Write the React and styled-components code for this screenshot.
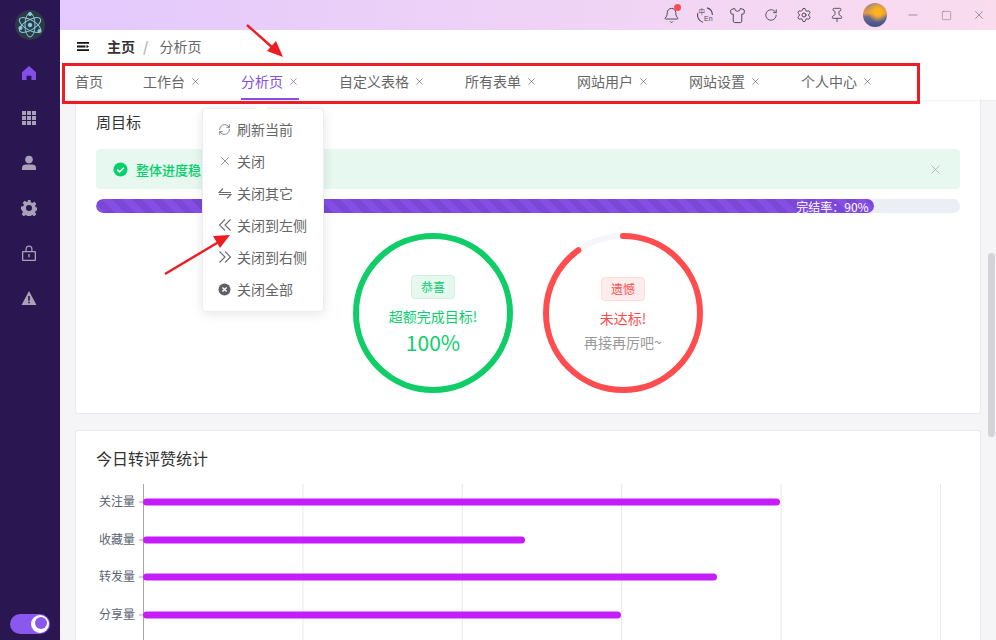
import React from "react";
import styled, { createGlobalStyle } from "styled-components";
import { RefreshCw, X, Settings, Pin, Bell, Shirt, RotateCw, Minus, Square } from "lucide-react";

const GlobalStyle = createGlobalStyle`
  html, body {
    margin: 0;
    padding: 0;
    width: 996px;
    height: 640px;
    overflow: hidden;
    font-family: "Noto Sans CJK SC", "Liberation Sans", sans-serif;
  }
  * { box-sizing: border-box; }
`;

const tabs = [
  { name: "首页", fixed: true },
  { name: "工作台" },
  { name: "分析页", active: true },
  { name: "自定义表格" },
  { name: "所有表单" },
  { name: "网站用户" },
  { name: "网站设置" },
  { name: "个人中心" },
];

const bars = [
  { name: "关注量", y: 18, end: 637 },
  { name: "收藏量", y: 56, end: 382 },
  { name: "转发量", y: 93, end: 574 },
  { name: "分享量", y: 131, end: 478 },
];

function Logo() {
  return (
    <LogoBox>
      <svg width="26" height="26" viewBox="0 0 26 26" fill="none" stroke="#86cfdc" strokeWidth="1">
        <ellipse cx="13" cy="13" rx="12" ry="5" transform="rotate(30 13 13)" />
        <ellipse cx="13" cy="13" rx="12" ry="5" transform="rotate(90 13 13)" />
        <ellipse cx="13" cy="13" rx="12" ry="5" transform="rotate(150 13 13)" />
        <circle cx="13" cy="13" r="1.8" fill="#86cfdc" />
        <circle cx="13" cy="2" r="1.6" fill="#86cfdc" />
        <circle cx="22.5" cy="19" r="1.6" fill="#86cfdc" />
        <circle cx="3.5" cy="16" r="1.6" fill="#86cfdc" />
      </svg>
    </LogoBox>
  );
}

function SideIcon({ active, children }) {
  return (
    <SideItem $active={active}>
      <svg width="16" height="16" viewBox="0 0 16 16" fill="currentColor">
        {children}
      </svg>
    </SideItem>
  );
}

function TranslateIcon() {
  return (
    <svg width="18" height="18" viewBox="0 0 18 18" fill="none" stroke="#4e4a55" strokeWidth="1.1">
      <path d="M11 1.900A7.400 7.400 0 0 1 16.400 9M7 16.200A7.400 7.400 0 0 1 1.800 7" />
      <text x="2.500" y="8" fontSize="6.500" fill="#4e4a55" stroke="none" fontFamily="Noto Sans CJK SC">中</text>
      <text x="8" y="14.500" fontSize="7" fill="#4e4a55" stroke="none" fontFamily="Liberation Sans">En</text>
    </svg>
  );
}

function CheckBadge() {
  return (
    <svg width="15" height="15" viewBox="0 0 15 15">
      <circle cx="7.500" cy="7.500" r="7" fill="#05d16c" />
      <path d="M4.200 7.600l2.400 2.300 4.200-4.200" fill="none" stroke="#fff" strokeWidth="1.500" />
    </svg>
  );
}

function CloseAllIcon() {
  return (
    <svg width="13" height="13" viewBox="0 0 13 13">
      <circle cx="6.500" cy="6.500" r="6" fill="#5f5f66" />
      <path d="M4.400 4.400l4.200 4.200M8.600 4.400l-4.200 4.200" stroke="#fff" strokeWidth="1.400" />
    </svg>
  );
}

function SwapIcon() {
  return (
    <svg width="14" height="14" viewBox="0 0 14 14" fill="none" stroke="#6b6b72" strokeWidth="1.100">
      <path d="M5 2.500 1 6.500h12M1 8.500h12l-4 4" />
    </svg>
  );
}

function DoubleArrow({ right }) {
  return (
    <svg width="14" height="14" viewBox="0 0 14 14" fill="none" stroke="#6b6b72" strokeWidth="1.100">
      <path d={right ? "M1.500 1.500 7 7l-5.500 5.500M7 1.500 12.500 7 7 12.500" : "M7 1.500 1.500 7 7 12.500M12.500 1.500 7 7l5.500 5.500"} />
    </svg>
  );
}

function Chart() {
  const grid = [0, 159.4, 318.8, 478.2, 637.6, 797];
  return (
    <svg width="864" height="156" viewBox="0 0 864 156">
      {grid.map((x, i) => (
        <line
          key={x}
          x1={47.5 + x}
          x2={47.5 + x}
          y1="0"
          y2="156"
          stroke={i === 0 ? "#a7a7ae" : "#e6e6ee"}
        />
      ))}
      {bars.map((bar) => (
        <g key={bar.name}>
          <line x1="43" x2="47" y1={bar.y} y2={bar.y} stroke="#a7a7ae" />
          <text x="39" y={bar.y + 4} fontSize="12" textAnchor="end" fill="#5a6472">
            {bar.name}
          </text>
          <rect x="47" y={bar.y - 3.5} width={bar.end} height="7" rx="3.5" fill="#c41cfa" />
        </g>
      ))}
    </svg>
  );
}

export default function App() {
  return (
    <Page>
      <GlobalStyle />
      <Sidebar>
        <Logo />
        <SideMenu>
          <SideIcon active>
            <path d="M8 1 1 7.200V15h4.600v-4.200h4.800V15H15V7.200z" />
          </SideIcon>
          <SideIcon>
            <path d="M1 1h4v4H1zM6 1h4v4H6zM11 1h4v4h-4zM1 6h4v4H1zM6 6h4v4H6zM11 6h4v4h-4zM1 11h4v4H1zM6 11h4v4H6zM11 11h4v4h-4z" />
          </SideIcon>
          <SideIcon>
            <circle cx="8" cy="4.600" r="3.800" />
            <path d="M1 15v-2.200C1 10.500 3 9.600 5 9.600h6c2 0 4 .9 4 3.200V15z" />
          </SideIcon>
          <SideIcon>
            <path
              fillRule="evenodd"
              d="M6.600 0h2.800l.4 2.200 1.500.7 2-1.200 2 2-1.200 2 .6 1.500 2.300.4v2.800l-2.300.4-.6 1.500 1.200 2-2 2-2-1.200-1.500.7-.4 2.200H6.600l-.4-2.200-1.500-.7-2 1.200-2-2 1.200-2-.6-1.500L0 9.400V6.600l2.300-.4.6-1.500-1.200-2 2-2 2 1.200 1.500-.7zM8 5a3 3 0 1 0 0 6 3 3 0 0 0 0-6z"
            />
          </SideIcon>
          <SideIcon>
            <path
              fillRule="evenodd"
              d="M4.500 6V4a3.500 3.500 0 0 1 7 0v2H14a1 1 0 0 1 1 1v8a1 1 0 0 1-1 1H2a1 1 0 0 1-1-1V7a1 1 0 0 1 1-1zm1.200 0h4.600V4a2.300 2.300 0 0 0-4.600 0zM2.300 7.300v7.400h11.400V7.300zM7.300 9h1.400v3.200H7.300z"
            />
          </SideIcon>
          <SideIcon>
            <path
              fillRule="evenodd"
              d="M8 1 .5 15h15zM7.200 6h1.600v4.800H7.200zm0 5.800h1.600v1.500H7.200z"
            />
          </SideIcon>
        </SideMenu>
        <ThemeSwitch>
          <SwitchKnob />
        </ThemeSwitch>
      </Sidebar>

      <Main>
        <TitleBar>
          <ToolIcon>
            <Bell size={17} strokeWidth={1.4} />
            <Dot />
          </ToolIcon>
          <ToolIcon>
            <TranslateIcon />
          </ToolIcon>
          <ToolIcon>
            <Shirt size={17} strokeWidth={1.4} />
          </ToolIcon>
          <ToolIcon>
            <RotateCw size={14} strokeWidth={1.5} />
          </ToolIcon>
          <ToolIcon>
            <Settings size={16} strokeWidth={1.5} />
          </ToolIcon>
          <ToolIcon>
            <Pin size={16} strokeWidth={1.4} />
          </ToolIcon>
          <Avatar />
          <WindowButtons>
            <Minus size={14} strokeWidth={1.2} />
            <Square size={11} strokeWidth={1.2} />
            <X size={14} strokeWidth={1.2} />
          </WindowButtons>
        </TitleBar>

        <BreadcrumbRow>
          <MenuGlyph>
            <svg width="14" height="11" viewBox="0 0 14 11" fill="#111">
              <path d="M1 1h12v1.800H1zM1 4.600h8.500v1.800H1zM1 8.200h12V10H1zM10.500 3.700 13 5.500l-2.500 1.800z" />
            </svg>
          </MenuGlyph>
          <CrumbHome>主页</CrumbHome>
          <CrumbSlash>/</CrumbSlash>
          <CrumbPage>分析页</CrumbPage>
        </BreadcrumbRow>

        <TabBar>
          {tabs.map((tab) => (
            <Tab key={tab.name} $active={tab.active}>
              {tab.name}
              {!tab.fixed && <X size={11} strokeWidth={1.5} />}
            </Tab>
          ))}
        </TabBar>

        <Content>
          <Cards>
            <TopCard>
              <CardTitle>周目标</CardTitle>
              <Alert>
                <AlertText>
                  <CheckBadge />
                  整体进度稳
                </AlertText>
                <X size={15} strokeWidth={1.2} color="#a3aab0" />
              </Alert>
              <Progress>
                <ProgressFill>完结率：90%</ProgressFill>
              </Progress>
              <Rings>
                <Ring>
                  <svg width="160" height="160" viewBox="0 0 160 160">
                    <circle cx="80" cy="80" r="77" fill="none" stroke="#10cd68" strokeWidth="6" />
                  </svg>
                  <RingBody>
                    <RingTag $tone="green">恭喜</RingTag>
                    <RingLine $color="#0ccf6e">超额完成目标!</RingLine>
                    <RingValue>100%</RingValue>
                  </RingBody>
                </Ring>
                <Ring>
                  <svg width="160" height="160" viewBox="0 0 160 160">
                    <circle cx="80" cy="80" r="77" fill="none" stroke="#f5f6fa" strokeWidth="6" />
                    <circle
                      cx="80"
                      cy="80"
                      r="77"
                      fill="none"
                      stroke="#ff4d4f"
                      strokeWidth="6"
                      strokeLinecap="round"
                      strokeDasharray={`${2 * Math.PI * 77 * 0.9} ${2 * Math.PI * 77}`}
                      transform="rotate(-90 80 80)"
                    />
                  </svg>
                  <RingBody>
                    <RingTag $tone="red">遗憾</RingTag>
                    <RingLine $color="#ff4d4f">未达标!</RingLine>
                    <RingLine $color="#999">再接再厉吧~</RingLine>
                  </RingBody>
                </Ring>
              </Rings>
            </TopCard>
            <ChartCard>
              <ChartTitle>今日转评赞统计</ChartTitle>
              <Chart />
            </ChartCard>
          </Cards>
          <ScrollTrack>
            <ScrollThumb />
          </ScrollTrack>
        </Content>
      </Main>

      <Menu>
        <MenuItem>
          <RefreshCw size={13} strokeWidth={1.4} />
          刷新当前
        </MenuItem>
        <MenuItem>
          <X size={14} strokeWidth={1.2} />
          关闭
        </MenuItem>
        <MenuItem>
          <SwapIcon />
          关闭其它
        </MenuItem>
        <MenuItem>
          <DoubleArrow />
          关闭到左侧
        </MenuItem>
        <MenuItem>
          <DoubleArrow right />
          关闭到右侧
        </MenuItem>
        <MenuItem>
          <CloseAllIcon />
          关闭全部
        </MenuItem>
      </Menu>

      <Annotation />
      <Arrows width="996" height="640" viewBox="0 0 996 640">
        <path d="M247 25 274 49" stroke="#ee1c25" strokeWidth="2.4" />
        <path d="M283 57 267 51 276 41z" fill="#ee1c25" />
        <path d="M165 274 222 240" stroke="#ee1c25" strokeWidth="2.4" />
        <path d="M230 235 220 248 213 236z" fill="#ee1c25" />
      </Arrows>
    </Page>
  );
}

const Page = styled.div`
  position: relative;
  display: flex;
  width: 996px;
  height: 640px;
  overflow: hidden;
  background: #f5f5f7;
`;

const Sidebar = styled.aside`
  display: flex;
  flex-direction: column;
  align-items: center;
  flex: 0 0 60px;
  padding: 10px 0 6px;
  background: #2a1650;
`;

const LogoBox = styled.div`
  display: flex;
  align-items: center;
  justify-content: center;
  width: 30px;
  height: 30px;
  border-radius: 50%;
  background: #2e3a46;
`;

const SideMenu = styled.nav`
  display: flex;
  flex-direction: column;
  flex: 1;
  margin-top: 10px;
  margin-right: 2px;
`;

const SideItem = styled.div`
  display: flex;
  align-items: center;
  justify-content: center;
  height: 45px;
  color: ${(p) => (p.$active ? "#8250e8" : "#a9a1b8")};
`;

const ThemeSwitch = styled.div`
  display: flex;
  align-items: center;
  justify-content: flex-end;
  width: 40px;
  height: 20px;
  padding-right: 1px;
  border-radius: 10px;
  background: #8a58ec;
`;

const SwitchKnob = styled.div`
  position: relative;
  width: 18px;
  height: 18px;
  border-radius: 50%;
  background: #fff;
  overflow: hidden;

  &::after {
    content: "";
    position: absolute;
    top: 1.5px;
    left: 4px;
    width: 12px;
    height: 12px;
    border-radius: 50%;
    background: #8a58ec;
  }
`;

const Main = styled.main`
  display: flex;
  flex-direction: column;
  flex: 1;
  min-width: 0;
`;

const TitleBar = styled.header`
  display: flex;
  align-items: center;
  justify-content: flex-end;
  flex: 0 0 30px;
  background: linear-gradient(90deg, #e3c9fd, #fadcef);
`;

const ToolIcon = styled.span`
  position: relative;
  display: flex;
  align-items: center;
  justify-content: center;
  width: 33px;
  height: 30px;
  color: #4e4a55;
`;

const Dot = styled.i`
  position: absolute;
  top: 4px;
  right: 7px;
  width: 7px;
  height: 7px;
  border-radius: 50%;
  background: #ff4d4f;
`;

const Avatar = styled.div`
  width: 24px;
  height: 24px;
  margin-left: 10px;
  border-radius: 50%;
  background:
    radial-gradient(circle at 62% 38%, #ffb21e 0 16%, transparent 48%),
    linear-gradient(180deg, #9a8a86 0%, #e89a3c 42%, #6b6a92 58%, #3f4f86 100%);
`;

const WindowButtons = styled.div`
  display: flex;
  align-items: center;
  justify-content: space-between;
  width: 80px;
  margin: 0 10px 0 19px;
  color: #76717d;
`;

const BreadcrumbRow = styled.div`
  display: flex;
  align-items: center;
  flex: 0 0 34px;
  padding: 0 0 2px 16px;
  font-size: 14px;
  background: #fff;
`;

const MenuGlyph = styled.span`
  display: flex;
  width: 31px;
`;

const CrumbHome = styled.b`
  color: #333;
  font-weight: 700;
`;

const CrumbSlash = styled.span`
  margin: 0 11px 0 8px;
  color: #b6b6bc;
  font-weight: 700;
`;

const CrumbPage = styled.span`
  color: #666;
`;

const TabBar = styled.div`
  display: flex;
  flex: 0 0 36px;
  gap: 40px;
  padding-left: 15px;
  background: #fff;
  box-shadow: 0 1px 2px rgba(0, 0, 0, 0.05);
  z-index: 1;
`;

const Tab = styled.div`
  display: flex;
  align-items: center;
  gap: 5px;
  height: 36px;
  font-size: 14px;
  color: ${(p) => (p.$active ? "#8250e8" : "#666")};
  border-bottom: 2px solid ${(p) => (p.$active ? "#8250e8" : "transparent")};
`;

const Content = styled.div`
  display: flex;
  flex: 1;
  min-height: 0;
  overflow: hidden;
`;

const Cards = styled.div`
  display: flex;
  flex-direction: column;
  flex: 1;
  min-width: 0;
  gap: 16px;
  padding-left: 15px;
`;

const TopCard = styled.section`
  flex: 0 0 314px;
  padding: 12px 20px 0;
  background: #fff;
  border: 1px solid #e9eaf0;
  border-top: 0;
  border-radius: 0 0 4px 4px;
`;

const CardTitle = styled.h3`
  margin: 0 0 17px;
  font-size: 15px;
  font-weight: 400;
  line-height: 20px;
  color: #333;
`;

const Alert = styled.div`
  display: flex;
  align-items: center;
  justify-content: space-between;
  height: 40px;
  padding: 0 17px;
  border-radius: 4px;
  background: #e6f8ef;
`;

const AlertText = styled.div`
  display: flex;
  align-items: center;
  gap: 8px;
  font-size: 13px;
  font-weight: 500;
  color: #04d06b;
`;

const Progress = styled.div`
  height: 14px;
  margin-top: 10px;
  border-radius: 7px;
  background: #ebeef5;
  overflow: hidden;
`;

const ProgressFill = styled.div`
  display: flex;
  align-items: center;
  justify-content: flex-end;
  width: 90%;
  height: 100%;
  padding-right: 5px;
  border-radius: 7px;
  font-size: 12px;
  color: #fff;
  background: repeating-linear-gradient(
    45deg,
    #854fe6 0 7px,
    #7a47d6 7px 14px
  );
`;

const Rings = styled.div`
  display: flex;
  justify-content: center;
  gap: 30px;
  margin-top: 20px;
`;

const Ring = styled.div`
  position: relative;
  width: 160px;
  height: 160px;
`;

const RingBody = styled.div`
  position: absolute;
  inset: 0;
  display: flex;
  flex-direction: column;
  align-items: center;
  justify-content: center;
  padding-top: 4px;
`;

const RingTag = styled.span`
  display: flex;
  align-items: center;
  justify-content: center;
  width: 44px;
  height: 24px;
  margin-bottom: 5px;
  border-radius: 4px;
  font-size: 12px;
  color: ${(p) => (p.$tone === "green" ? "#0ccf6e" : "#ff4d4f")};
  background: ${(p) => (p.$tone === "green" ? "#e6f8ef" : "#ffeded")};
  border: 1px solid ${(p) => (p.$tone === "green" ? "#cdf3df" : "#ffdbdb")};
`;

const RingLine = styled.div`
  font-size: 14px;
  line-height: 24px;
  color: ${(p) => p.$color};
`;

const RingValue = styled.div`
  font-size: 21px;
  line-height: 28px;
  color: #0ccf6e;
`;

const ChartCard = styled.section`
  flex: 1;
  padding: 16px 20px 0;
  background: #fff;
  border: 1px solid #e9eaf0;
  border-bottom: 0;
  border-radius: 4px 4px 0 0;
  overflow: hidden;

  svg text {
    font-family: "Noto Sans CJK SC", sans-serif;
  }
`;

const ChartTitle = styled.h3`
  margin: 0 0 15px;
  font-size: 16px;
  font-weight: 400;
  line-height: 22px;
  color: #333;
`;

const ScrollTrack = styled.div`
  position: relative;
  flex: 0 0 15px;
`;

const ScrollThumb = styled.div`
  position: absolute;
  top: 153px;
  left: 7px;
  width: 7px;
  height: 184px;
  border-radius: 4px;
  background: #d3d4d7;
`;

const Menu = styled.div`
  position: absolute;
  top: 108px;
  left: 202px;
  width: 122px;
  height: 204px;
  padding: 4px 0;
  background: #fff;
  border: 1px solid #ebeef5;
  border-radius: 4px;
  box-shadow: 0 2px 12px rgba(0, 0, 0, 0.1);
  z-index: 2;

  &::before {
    content: "";
    position: absolute;
    top: -5px;
    left: 55px;
    width: 8px;
    height: 8px;
    background: #fff;
    transform: rotate(45deg);
  }
`;

const MenuItem = styled.div`
  position: relative;
  display: grid;
  grid-template-columns: 16px 1fr;
  align-items: center;
  justify-items: start;
  column-gap: 3px;
  height: 32px;
  padding-left: 15px;
  font-size: 14px;
  color: #666;

  & > svg {
    color: #66666c;
  }
`;

const Annotation = styled.div`
  position: absolute;
  top: 63px;
  left: 62px;
  width: 858px;
  height: 41px;
  border: 3px solid #ee1c25;
  z-index: 3;
`;

const Arrows = styled.svg`
  position: absolute;
  top: 0;
  left: 0;
  z-index: 4;
  pointer-events: none;
`;
